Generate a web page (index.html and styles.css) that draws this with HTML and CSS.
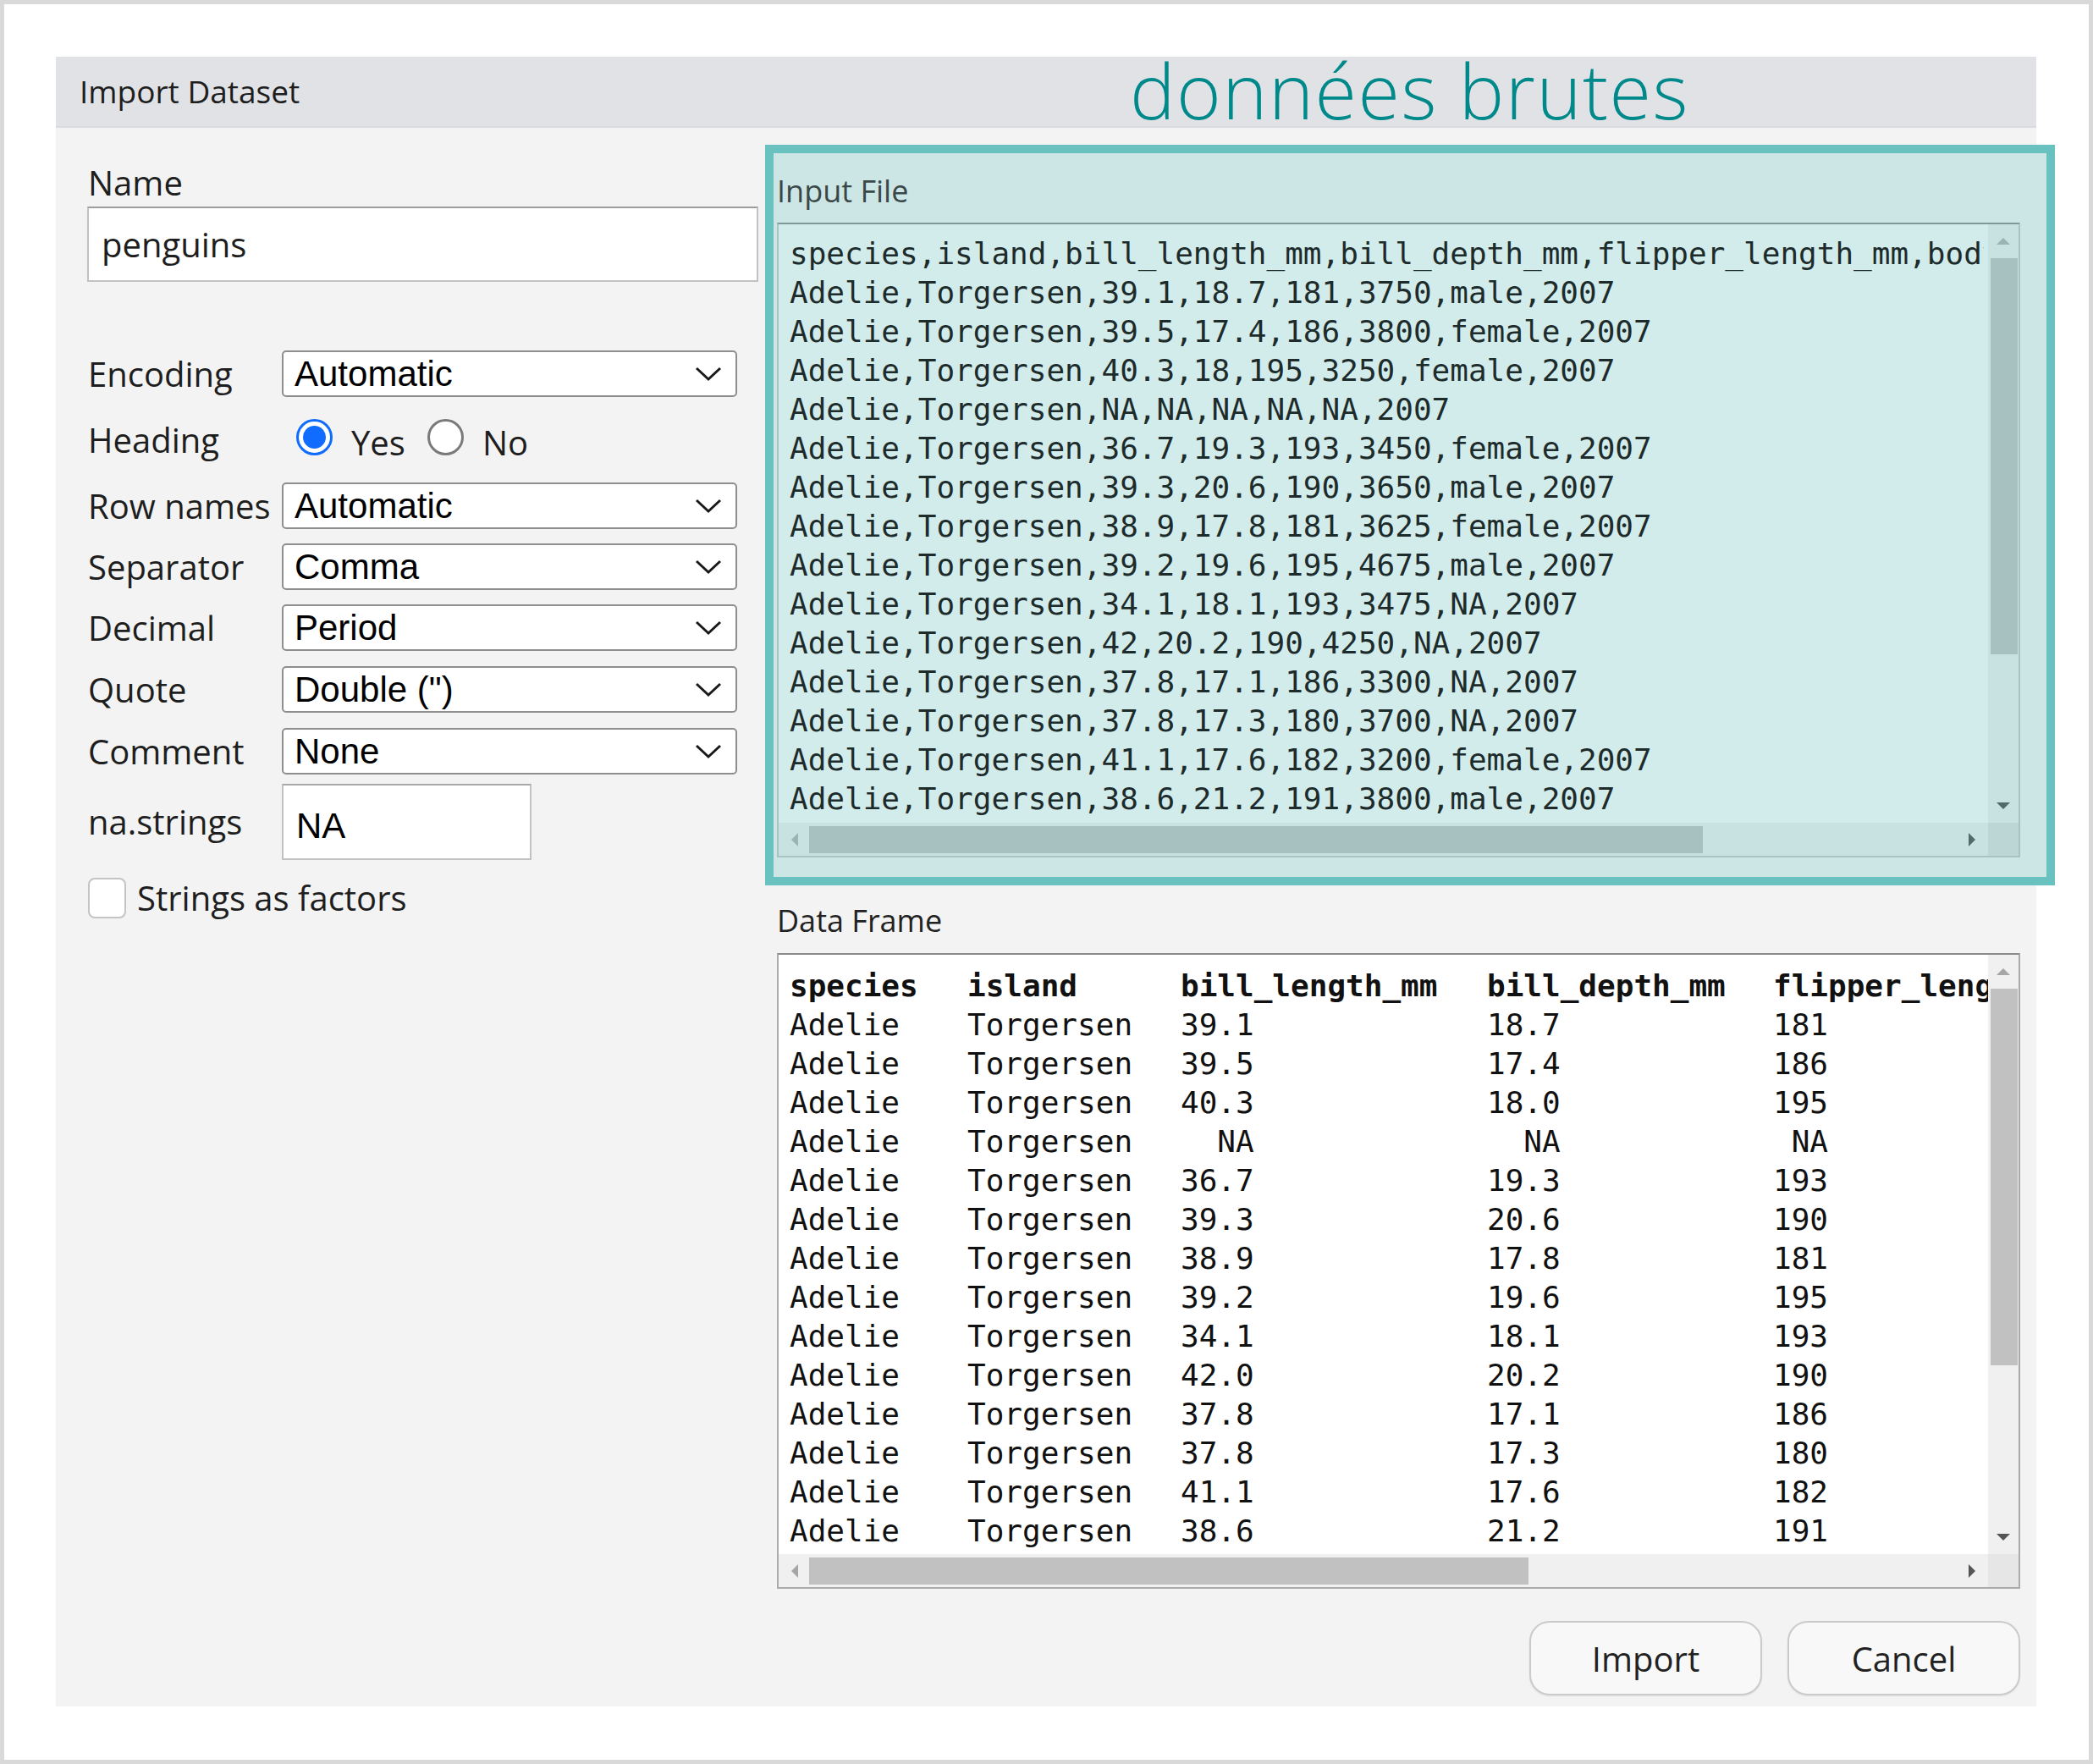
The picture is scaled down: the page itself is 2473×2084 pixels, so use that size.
FILE: index.html
```html
<!DOCTYPE html>
<html lang="fr">
<head>
<meta charset="utf-8">
<title>Import Dataset</title>
<link rel="stylesheet" href="styles.css">
</head>
<body>
<div class="frame">
  <div class="dialog">
    <div class="titlebar">
      <span class="title">Import Dataset</span>
      <span class="annotation">données brutes</span>
    </div>
    <div class="content">
      <div class="left">
        <div class="label">Name</div>
        <div class="name-input">penguins</div>

        <div class="row row-enc">
          <div class="row-label">Encoding</div>
          <div class="select"><span>Automatic</span><svg class="chev" viewBox="0 0 32 18"><polyline points="2,2 16,15 30,2"/></svg></div>
        </div>
        <div class="row row-heading">
          <div class="row-label">Heading</div>
          <div class="radios">
            <span class="radio on"><span class="dot"></span></span><span class="radio-text">Yes</span>
            <span class="radio off"></span><span class="radio-text">No</span>
          </div>
        </div>
        <div class="row">
          <div class="row-label">Row names</div>
          <div class="select"><span>Automatic</span><svg class="chev" viewBox="0 0 32 18"><polyline points="2,2 16,15 30,2"/></svg></div>
        </div>
        <div class="row">
          <div class="row-label">Separator</div>
          <div class="select"><span>Comma</span><svg class="chev" viewBox="0 0 32 18"><polyline points="2,2 16,15 30,2"/></svg></div>
        </div>
        <div class="row">
          <div class="row-label">Decimal</div>
          <div class="select"><span>Period</span><svg class="chev" viewBox="0 0 32 18"><polyline points="2,2 16,15 30,2"/></svg></div>
        </div>
        <div class="row row-gap18">
          <div class="row-label">Quote</div>
          <div class="select"><span>Double (")</span><svg class="chev" viewBox="0 0 32 18"><polyline points="2,2 16,15 30,2"/></svg></div>
        </div>
        <div class="row row-gap18">
          <div class="row-label">Comment</div>
          <div class="select"><span>None</span><svg class="chev" viewBox="0 0 32 18"><polyline points="2,2 16,15 30,2"/></svg></div>
        </div>
        <div class="row row-na">
          <div class="row-label">na.strings</div>
          <div class="na-input">NA</div>
        </div>
        <div class="row row-check">
          <span class="checkbox"></span>
          <span class="check-text">Strings as factors</span>
        </div>
      </div>

      <div class="right">
        <div class="teal">
          <div class="panel-label">Input File</div>
          <div class="codebox">
            <div class="lines">species,island,bill_length_mm,bill_depth_mm,flipper_length_mm,body_mass_g,sex,year
Adelie,Torgersen,39.1,18.7,181,3750,male,2007
Adelie,Torgersen,39.5,17.4,186,3800,female,2007
Adelie,Torgersen,40.3,18,195,3250,female,2007
Adelie,Torgersen,NA,NA,NA,NA,NA,2007
Adelie,Torgersen,36.7,19.3,193,3450,female,2007
Adelie,Torgersen,39.3,20.6,190,3650,male,2007
Adelie,Torgersen,38.9,17.8,181,3625,female,2007
Adelie,Torgersen,39.2,19.6,195,4675,male,2007
Adelie,Torgersen,34.1,18.1,193,3475,NA,2007
Adelie,Torgersen,42,20.2,190,4250,NA,2007
Adelie,Torgersen,37.8,17.1,186,3300,NA,2007
Adelie,Torgersen,37.8,17.3,180,3700,NA,2007
Adelie,Torgersen,41.1,17.6,182,3200,female,2007
Adelie,Torgersen,38.6,21.2,191,3800,male,2007</div>
            <div class="vscroll teal-sb">
              <svg class="arr" viewBox="0 0 16 10"><polygon points="0,9 8,1 16,9" class="a-light"/></svg>
              <div class="vthumb thumb-input"></div>
              <div class="vspace"></div>
              <svg class="arr" viewBox="0 0 16 10"><polygon points="0,1 8,9 16,1" class="a-dark"/></svg>
            </div>
            <div class="hscroll teal-sb">
              <svg class="harr" viewBox="0 0 10 16"><polygon points="9,0 1,8 9,16" class="a-light"/></svg>
              <div class="hthumb hthumb-input"></div>
              <div class="hspace"></div>
              <svg class="harr" viewBox="0 0 10 16"><polygon points="1,0 9,8 1,16" class="a-dark"/></svg>
            </div>
            <div class="corner teal-corner"></div>
          </div>
        </div>

        <div class="df-label">Data Frame</div>
        <div class="dfbox">
          <div class="dfgrid">
            <span class="h">species</span><span class="h">island</span><span class="h">bill_length_mm</span><span class="h">bill_depth_mm</span><span class="h">flipper_length_mm</span><span class="h">body_mass_g</span>
            <span>Adelie</span><span>Torgersen</span><span>39.1</span><span>18.7</span><span>181</span><span>3750</span>
            <span>Adelie</span><span>Torgersen</span><span>39.5</span><span>17.4</span><span>186</span><span>3800</span>
            <span>Adelie</span><span>Torgersen</span><span>40.3</span><span>18.0</span><span>195</span><span>3250</span>
            <span>Adelie</span><span>Torgersen</span><span>  NA</span><span>  NA</span><span> NA</span><span>  NA</span>
            <span>Adelie</span><span>Torgersen</span><span>36.7</span><span>19.3</span><span>193</span><span>3450</span>
            <span>Adelie</span><span>Torgersen</span><span>39.3</span><span>20.6</span><span>190</span><span>3650</span>
            <span>Adelie</span><span>Torgersen</span><span>38.9</span><span>17.8</span><span>181</span><span>3625</span>
            <span>Adelie</span><span>Torgersen</span><span>39.2</span><span>19.6</span><span>195</span><span>4675</span>
            <span>Adelie</span><span>Torgersen</span><span>34.1</span><span>18.1</span><span>193</span><span>3475</span>
            <span>Adelie</span><span>Torgersen</span><span>42.0</span><span>20.2</span><span>190</span><span>4250</span>
            <span>Adelie</span><span>Torgersen</span><span>37.8</span><span>17.1</span><span>186</span><span>3300</span>
            <span>Adelie</span><span>Torgersen</span><span>37.8</span><span>17.3</span><span>180</span><span>3700</span>
            <span>Adelie</span><span>Torgersen</span><span>41.1</span><span>17.6</span><span>182</span><span>3200</span>
            <span>Adelie</span><span>Torgersen</span><span>38.6</span><span>21.2</span><span>191</span><span>3800</span>
          </div>
          <div class="vscroll gray-sb">
            <svg class="arr" viewBox="0 0 16 10"><polygon points="0,9 8,1 16,9" class="g-light"/></svg>
            <div class="vthumb thumb-df"></div>
            <div class="vspace"></div>
            <svg class="arr" viewBox="0 0 16 10"><polygon points="0,1 8,9 16,1" class="g-dark"/></svg>
          </div>
          <div class="hscroll gray-sb">
            <svg class="harr" viewBox="0 0 10 16"><polygon points="9,0 1,8 9,16" class="g-light"/></svg>
            <div class="hthumb hthumb-df"></div>
            <div class="hspace"></div>
            <svg class="harr" viewBox="0 0 10 16"><polygon points="1,0 9,8 1,16" class="g-dark"/></svg>
          </div>
          <div class="corner gray-corner"></div>
        </div>

        <div class="buttons">
          <div class="btn">Import</div>
          <div class="btn">Cancel</div>
        </div>
      </div>
    </div>
  </div>
</div>
</body>
</html>
```
FILE: styles.css
```css
* { box-sizing: border-box; }
html, body { margin: 0; padding: 0; background: #ffffff; }

.frame {
  width: 2473px;
  height: 2084px;
  border: 5px solid #d9d9d9;
  background: #ffffff;
  padding: 62px 0 0 61px;
}

.dialog {
  width: 2340px;
  height: 1949px;
  display: flex;
  flex-direction: column;
  font-family: "Open Sans", "Noto Sans", sans-serif;
  color: #1e1e1e;
}

.titlebar {
  position: relative;
  height: 84px;
  flex: none;
  background: #e1e2e6;
  border-bottom: 2px solid #dadbdf;
  display: flex;
  align-items: center;
  padding-left: 28px;
  font-size: 37px;
  line-height: 54px;
}

.annotation {
  position: absolute;
  left: 1269px;
  top: -21px;
  font-size: 90px;
  font-weight: 300;
  letter-spacing: 1.5px;
  line-height: 120px;
  color: #00898a;
  white-space: nowrap;
}

.content {
  flex: 1;
  background: #f2f3f2;
  display: flex;
  gap: 8px;
  padding: 20px 0 13px 38px;
}

/* ---------- left column ---------- */
.left {
  width: 792px;
  flex: none;
  padding-top: 18px;
  display: flex;
  flex-direction: column;
}

.label { font-size: 40px; line-height: 54px; }

.name-input {
  margin-top: 1px;
  margin-left: -1px;
  width: 793px;
  height: 89px;
  background: #ffffff;
  border: 2px solid #c2c2c2;
  border-top-color: #9d9d9d;
  padding: 0 15px;
  display: flex;
  align-items: center;
  font-size: 40px;
  line-height: 54px;
}

.row {
  display: flex;
  align-items: center;
  height: 55px;
  margin-top: 17px;
}
.row-enc { margin-top: 81px; }
.row-heading { height: 67px; }
.row-gap18 { margin-top: 18px; }
.row-na { height: 90px; margin-top: 11px; }
.row-check { height: 48px; margin-top: 21px; }

.row-label {
  width: 229px;
  flex: none;
  font-size: 40px;
  line-height: 54px;
  white-space: nowrap;
}

.select {
  width: 538px;
  height: 55px;
  background: #ffffff;
  border: 2px solid #8e8e8e;
  border-radius: 5px;
  display: flex;
  align-items: center;
  justify-content: space-between;
  padding: 0 16px 0 13px;
  font-family: "Liberation Sans", Arial, sans-serif;
  font-size: 42px;
  line-height: 47px;
  color: #000;
}

.chev { width: 32px; height: 18px; }
.chev polyline { fill: none; stroke: #1a1a1a; stroke-width: 3; }

.radios {
  display: flex;
  align-items: center;
  padding-left: 17px;
  font-size: 40px;
  line-height: 54px;
}
.radio {
  width: 43px;
  height: 43px;
  border-radius: 50%;
  background: #ffffff;
  display: flex;
  align-items: center;
  justify-content: center;
  flex: none;
  margin-top: -6px;
}
.radio.on { border: 3px solid #0f6cff; }
.radio.on .dot { width: 27px; height: 27px; border-radius: 50%; background: #0f6cff; }
.radio.off { border: 3px solid #7a7a7a; margin-left: 26px; }
.radio-text { margin-left: 22px; padding-top: 6px; }

.na-input {
  width: 295px;
  height: 90px;
  background: #ffffff;
  border: 2px solid #c2c2c2;
  border-top-color: #a8a8a8;
  padding: 10px 0 0 15px;
  display: flex;
  align-items: center;
  font-family: "Liberation Sans", Arial, sans-serif;
  font-size: 42px;
  color: #000;
}

.checkbox {
  width: 45px;
  height: 48px;
  border: 2px solid #c4c4c4;
  border-radius: 8px;
  background: #ffffff;
  flex: none;
}
.check-text { margin-left: 13px; font-size: 40px; line-height: 54px; }

/* ---------- right column ---------- */
.right {
  width: 1502px;
  flex: none;
  display: flex;
  flex-direction: column;
}

.teal {
  margin-right: -22px;
  height: 875px;
  border: 10px solid #69c2bf;
  background: #cce5e5;
  padding-left: 4px;
}

.panel-label {
  font-size: 36px;
  line-height: 49px;
  padding-top: 20px;
  margin-bottom: 13px;
  color: #3b4848;
}

.codebox {
  width: 1469px;
  height: 750px;
  border: 2px solid #a9c2c2;
  border-top-color: #7f9898;
  background: #d2ebeb;
  display: grid;
  grid-template-columns: 1fr 36px;
  grid-template-rows: 1fr 39px;
}

.lines {
  overflow: hidden;
  margin-right: 5px;
  padding: 12px 0 0 13px;
  font-family: "DejaVu Sans Mono", "Liberation Mono", monospace;
  font-size: 36px;
  line-height: 46px;
  white-space: pre;
  color: #1d2b2b;
}

.vscroll {
  display: flex;
  flex-direction: column;
  align-items: center;
}
.vscroll .arr { width: 16px; height: 10px; flex: none; margin: 15px 0; }
.vthumb { width: 32px; flex: none; margin-left: 2px; }
.vspace { flex: 1; }
.thumb-input { height: 468px; }
.thumb-df { height: 445px; }

.hscroll {
  display: flex;
  align-items: center;
}
.hscroll .harr { width: 10px; height: 16px; flex: none; margin: 0 14px; }
.hthumb { height: 32px; flex: none; margin-left: -2px; }
.hspace { flex: 1; }
.hthumb-input { width: 1056px; }
.hthumb-df { width: 850px; }

.teal-sb { background: #c8e1e1; }
.teal-sb .vthumb, .teal-sb .hthumb { background: #a7c0c0; }
.teal-corner { background: #bcd5d5; }
.a-light { fill: #9ab3b3; }
.a-dark { fill: #536a6a; }

.gray-sb { background: #f0f0f0; }
.gray-sb .vthumb, .gray-sb .hthumb { background: #c1c1c1; }
.gray-corner { background: #e6e6e6; }
.g-light { fill: #a6a6a6; }
.g-dark { fill: #555555; }

.df-label {
  padding-left: 14px;
  font-size: 36px;
  line-height: 49px;
  margin-top: 17px;
  margin-bottom: 14px;
  color: #222;
}

.dfbox {
  margin-left: 14px;
  width: 1469px;
  height: 751px;
  border: 2px solid #ababab;
  border-top-color: #8c8c8c;
  background: #ffffff;
  display: grid;
  grid-template-columns: 1fr 36px;
  grid-template-rows: 1fr 39px;
}

.dfgrid {
  overflow: hidden;
  padding: 14px 0 0 13px;
  display: grid;
  grid-template-columns: 210px 252px 362px 338px 440px 300px;
  grid-auto-rows: 46px;
  font-family: "DejaVu Sans Mono", "Liberation Mono", monospace;
  font-size: 36px;
  line-height: 46px;
  white-space: pre;
  color: #111;
}
.dfgrid .h { font-weight: bold; }

.buttons {
  margin-top: 38px;
  display: flex;
  justify-content: flex-end;
  gap: 30px;
  padding-right: 19px;
}

.btn {
  width: 275px;
  height: 88px;
  border: 2px solid #cbcbcb;
  border-radius: 24px;
  background: #f8f8f8;
  box-shadow: 0 1px 2px rgba(0, 0, 0, 0.08);
  display: flex;
  align-items: center;
  justify-content: center;
  font-size: 40px;
  color: #222;
}
```
